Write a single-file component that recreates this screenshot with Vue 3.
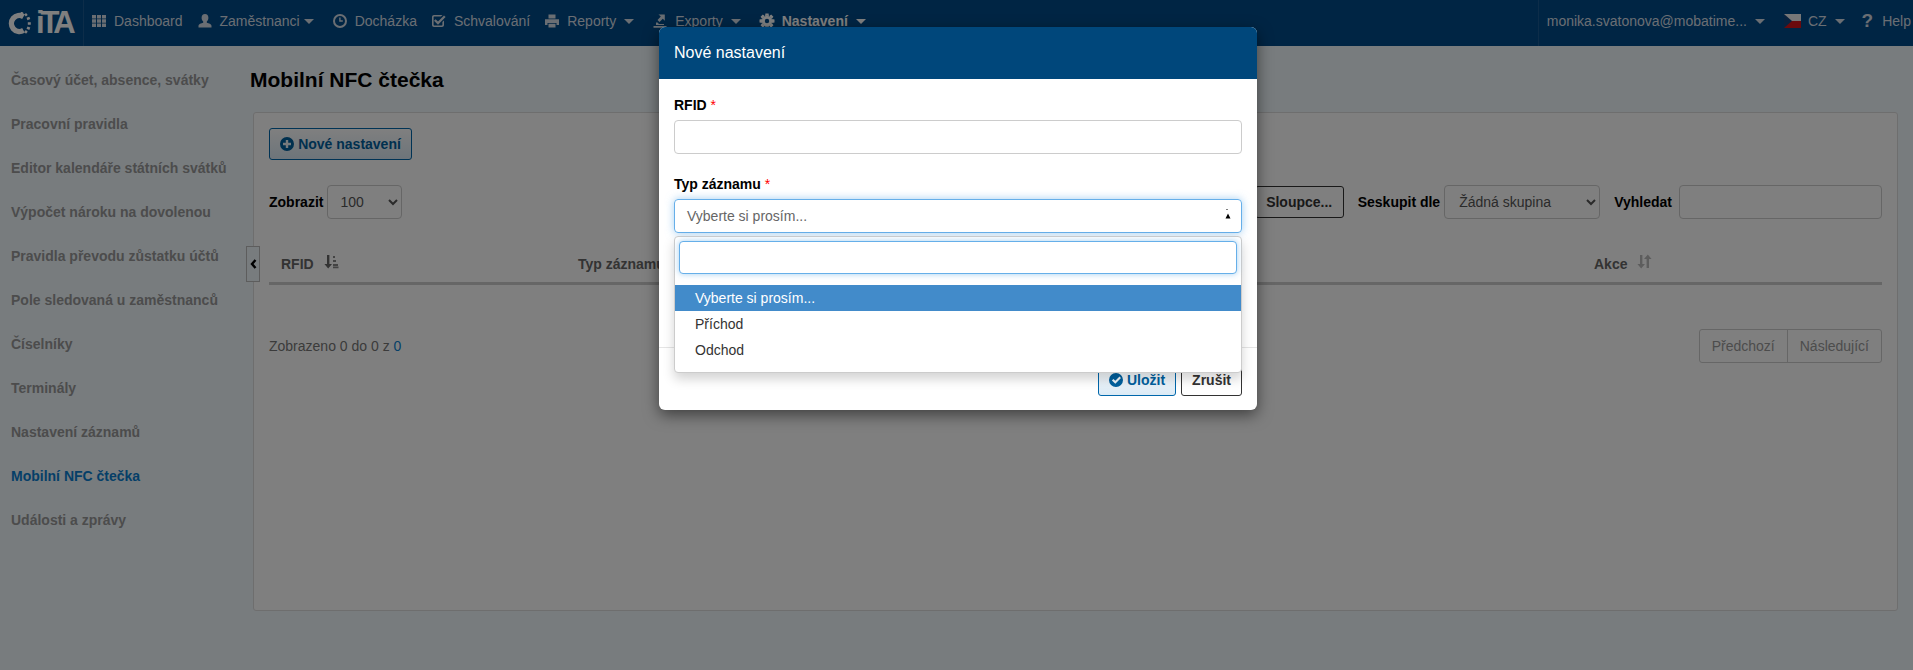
<script setup>
function gear() {
  let d = ''
  for (let i = 0; i < 8; i++) {
    const a = (i * Math.PI) / 4
    const pts = [[-1.6, -7.5], [1.6, -7.5], [1.9, -5.1], [-1.9, -5.1]].map(([x, y]) => {
      const px = 8 + x * Math.cos(a) - y * Math.sin(a)
      const py = 8 + x * Math.sin(a) + y * Math.cos(a)
      return `${px.toFixed(2)} ${py.toFixed(2)}`
    })
    d += `M${pts.join('L')}z`
  }
  return d + 'M8 2.8a5.2 5.2 0 1 0 0 10.4A5.2 5.2 0 0 0 8 2.8zm0 3a2.2 2.2 0 1 1 0 4.4a2.2 2.2 0 0 1 0-4.4z'
}

const icons = {
  grid: 'M1 2h4v3.4H1zM6 2h4v3.4H6zM11 2h4v3.4h-4zM1 6.3h4v3.4H1zM6 6.3h4v3.4H6zM11 6.3h4v3.4h-4zM1 10.6h4V14H1zM6 10.6h4V14H6zM11 10.6h4V14h-4z',
  user: 'M8 1C5.8 1 4.6 2.7 4.6 4.8c0 1.6.6 3 1.6 3.8v1.2c-2 .6-4.7 1.2-4.7 3.2v1.5h13v-1.5c0-2-2.7-2.6-4.7-3.2V8.6c1-.8 1.6-2.2 1.6-3.8C11.4 2.7 10.2 1 8 1z',
  clock: 'M8 1a7 7 0 1 0 0 14A7 7 0 0 0 8 1zm0 2a5 5 0 1 1 0 10A5 5 0 0 1 8 3zM7.2 4.5v4.2h3.6V7.3H8.6V4.5z',
  check: 'M3 2h8.5L9.9 3.6H3.2c-.4 0-.6.2-.6.6v7.6c0 .4.2.6.6.6h7.6c.4 0 .6-.2.6-.6V9L13 7.4V12c0 1.2-.9 2-2 2H3c-1.1 0-2-.8-2-2V4c0-1.1.9-2 2-2zM4.6 6.2L7 8.5l6-6 1.6 1.6L7 11.7 3 7.8z',
  print: 'M4.5 1.5h7v4h-7zM1 6.3h14v5.7h-2.5v-2h-9v2H1zM4.5 10.8h7v3.7h-7z',
  export: 'M6.5 1.5h6.3v6.3l-2-2-3.3 3.3-2-2 3.3-3.6zM4 9.5h1.5l1.5 1.5H12v1H4zM1.5 13h13v1.8h-13z',
  cog: gear()
}

const navItems = [
  { label: 'Dashboard', icon: 'grid' },
  { label: 'Zaměstnanci', icon: 'user', caret: 'tight' },
  { label: 'Docházka', icon: 'clock' },
  { label: 'Schvalování', icon: 'check' },
  { label: 'Reporty', icon: 'print', caret: 'wide' },
  { label: 'Exporty', icon: 'export', caret: 'wide' },
  { label: 'Nastavení', icon: 'cog', caret: 'wide', active: true }
]

const sideItems = [
  'Časový účet, absence, svátky',
  'Pracovní pravidla',
  'Editor kalendáře státních svátků',
  'Výpočet nároku na dovolenou',
  'Pravidla převodu zůstatku účtů',
  'Pole sledovaná u zaměstnanců',
  'Číselníky',
  'Terminály',
  'Nastavení záznamů',
  'Mobilní NFC čtečka',
  'Události a zprávy'
]

const options = ['Vyberte si prosím...', 'Příchod', 'Odchod']
</script>

<template>
  <div class="page">
    <header class="nav">
      <div class="logo">
        <svg class="logo__mark" width="23" height="23" viewBox="0 0 23 23">
          <path d="M15.5 4.6A8 8 0 1 0 15.5 18.400" fill="none" stroke="#fff" stroke-width="5.400" />
          <path d="M13.500 1.500l1-1.300M17 3.600l1.900-1.600M19 7l2.800-1.100M19.800 11.500h3M19 15.600l2.800 1.200M17 19l1.900 1.700" fill="none" stroke="#fff" stroke-width="2.600" />
        </svg>
        <span class="logo__text">iTA</span>
      </div>
      <nav class="nav__main">
        <a v-for="item in navItems" :key="item.label" class="nav__item" :class="{ 'is-active': item.active }">
          <svg class="nav__icon" viewBox="0 0 16 16"><path :d="icons[item.icon]" fill-rule="evenodd" /></svg>
          <span>{{ item.label }}</span>
          <i v-if="item.caret" class="caret" :class="`caret--${item.caret}`"></i>
        </a>
      </nav>
      <div class="nav__right">
        <a class="nav__item nav__user">monika.svatonova@mobatime...<i class="caret caret--wide"></i></a>
        <a class="nav__item nav__lang">
          <svg width="17" height="14" viewBox="0 0 17 14">
            <rect width="17" height="7" fill="#eee" />
            <rect y="7" width="17" height="7" fill="#d7141a" />
            <path d="M0 0l8 7-8 7z" fill="#11457e" />
          </svg>
          <span>CZ</span><i class="caret caret--wide"></i>
        </a>
        <a class="nav__item nav__help"><b>?</b><span>Help</span></a>
      </div>
    </header>

    <div class="body">
      <aside class="side">
        <a v-for="item in sideItems" :key="item" class="side__item" :class="{ 'is-active': item === 'Mobilní NFC čtečka' }">{{ item }}</a>
      </aside>

      <main class="main">
        <h1 class="main__title">Mobilní NFC čtečka</h1>
        <section class="card">
          <span class="card__toggle">
            <svg width="7" height="10" viewBox="0 0 7 10"><path d="M5.500 1L2 5l3.500 4" fill="none" stroke="#000" stroke-width="2.400" /></svg>
          </span>
          <button class="btn btn--primary btn--add">
            <svg width="14" height="14" viewBox="0 0 14 14"><path d="M7 0a7 7 0 1 0 0 14A7 7 0 0 0 7 0zM5.800 3h2.400v2.800H11v2.400H8.200V11H5.800V8.200H3V5.800h2.800z" fill="#00609e" fill-rule="evenodd" /></svg>
            Nové nastavení
          </button>

          <div class="filters">
            <label class="filters__label">Zobrazit</label>
            <select class="control control--size"><option>100</option></select>
            <button class="btn btn--plain filters__columns">Sloupce...</button>
            <label class="filters__label filters__label--group">Seskupit dle</label>
            <select class="control control--group"><option>Žádná skupina</option></select>
            <label class="filters__label filters__label--search">Vyhledat</label>
            <input class="control control--search" />
          </div>

          <div class="thead">
            <span class="thead__cell">
              RFID
              <svg class="sort" width="15" height="15" viewBox="0 0 15 15"><path d="M3 1h2.400v9H8l-3.800 4.500L.4 10H3z" fill="#666" /><path d="M9 2h2v2H9zM9 6h3v2H9zM9 10h5v2H9zM9 12.600h5.500v1.600H9z" fill="#888" /></svg>
            </span>
            <span class="thead__cell">Typ záznamu</span>
            <span class="thead__cell">
              Akce
              <svg class="sort" width="15" height="15" viewBox="0 0 15 15"><path d="M3 1h2.400v9H8l-3.800 4.500L.4 10H3zM9.600 14V5H7l3.800-4.500L14.600 5H12v9z" fill="#bbb" /></svg>
            </span>
          </div>

          <div class="foot">
            <span class="foot__info">Zobrazeno 0 do 0 z <a class="foot__link">0</a></span>
            <div class="pager">
              <a class="pager__btn">Předchozí</a>
              <a class="pager__btn">Následující</a>
            </div>
          </div>
        </section>
      </main>
    </div>

    <div class="backdrop"></div>

    <div class="modal">
      <div class="modal__head">Nové nastavení</div>
      <div class="modal__body">
        <label class="field-label">RFID <em>*</em></label>
        <input class="control control--wide" />
        <label class="field-label field-label--second">Typ záznamu <em>*</em></label>
        <div class="picker">
          <div class="picker__value">
            Vyberte si prosím...
            <svg class="picker__arrow" width="6" height="10" viewBox="0 0 6 10"><path d="M1.500 0h1v1h-1zM3 4.500L5.500 9.500H.5z" fill="#000" /></svg>
          </div>
          <div class="picker__menu">
            <div class="picker__search"><input class="picker__input" /></div>
            <ul class="picker__list">
              <li v-for="(opt, i) in options" :key="opt" class="picker__option" :class="{ 'is-selected': i === 0 }">{{ opt }}</li>
            </ul>
          </div>
        </div>
      </div>
      <div class="modal__foot">
        <button class="btn btn--primary">
          <svg width="14" height="14" viewBox="0 0 14 14"><path d="M7 0a7 7 0 1 0 0 14A7 7 0 0 0 7 0zm3.500 3.600L12 5.100l-5.700 5.700L2.900 7.400l1.500-1.500 1.900 1.900z" fill="#00609e" fill-rule="evenodd" /></svg>
          Uložit
        </button>
        <button class="btn btn--plain">Zrušit</button>
      </div>
    </div>
  </div>
</template>

<style>
html, body {
  margin: 0;
  overflow: hidden;
}
</style>

<style scoped>
* {
  box-sizing: border-box;
}

.page {
  position: relative;
  display: flex;
  flex-direction: column;
  height: 100vh;
  overflow: hidden;
  font-family: "Liberation Sans", Arial, sans-serif;
  font-size: 14px;
  color: #333;
  background-color: #f0f8fd;
}

.nav {
  display: flex;
  align-items: center;
  flex: none;
  height: 46px;
  background-color: #004a88;
  color: #d5dde6;
}

.logo {
  display: flex;
  align-items: center;
  flex: none;
  width: 84px;
  height: 46px;
  padding-left: 8px;
  border-right: 1px solid #1a5a92;
}

.logo__mark {
  flex: none;
}

.logo__text {
  margin-left: 5px;
  font-size: 31px;
  font-weight: 700;
  letter-spacing: -4px;
  color: #fff;
}

.nav__main {
  display: flex;
  align-items: center;
  gap: 14px;
  margin-left: 7px;
  padding-bottom: 4px;
}

.nav__item {
  display: flex;
  align-items: center;
  white-space: nowrap;
}

.nav__item.is-active {
  font-weight: 700;
  color: #fff;
}

.nav__icon {
  flex: none;
  width: 16px;
  height: 16px;
  margin-right: 7px;
  fill: currentColor;
}

.caret {
  flex: none;
  width: 0;
  height: 0;
  margin-right: 4px;
  border-top: 5px solid currentColor;
  border-left: 5px solid transparent;
  border-right: 5px solid transparent;
}

.caret--tight {
  margin-left: 4px;
}

.caret--wide {
  margin-left: 8px;
}

.nav__right {
  display: flex;
  align-items: center;
  height: 46px;
  margin-left: auto;
  padding: 0 2px 4px 8px;
  border-left: 1px solid #1a5a92;
}

.nav__lang {
  margin-left: 15px;
}

.nav__lang span {
  margin-left: 7px;
}

.nav__help {
  margin-left: 13px;
}

.nav__help b {
  margin-right: 9px;
  font-size: 19px;
}

.body {
  display: flex;
  flex: 1;
  min-height: 0;
}

.side {
  flex: none;
  width: 250px;
  padding: 12px 0 0 11px;
}

.side__item {
  display: block;
  height: 44px;
  line-height: 44px;
  font-size: 14px;
  font-weight: 700;
  color: #999;
  white-space: nowrap;
}

.side__item.is-active {
  color: #0b7fd0;
}

.main {
  flex: 1;
  min-width: 0;
  padding-right: 15px;
}

.main__title {
  margin: 0;
  padding-top: 22px;
  height: 66px;
  font-size: 21px;
  line-height: 24px;
  font-weight: 700;
  color: #000;
}

.card {
  position: relative;
  height: 499px;
  margin-left: 3px;
  padding: 15px;
  border: 1px solid #ddd;
  border-radius: 3px;
  background-color: #fff;
}

.card__toggle {
  position: absolute;
  left: -8px;
  top: 133px;
  display: flex;
  align-items: center;
  justify-content: center;
  width: 14px;
  height: 36px;
  border: 1px solid #bbb;
  background-color: #f0f8fd;
}

.btn {
  display: inline-flex;
  align-items: center;
  justify-content: center;
  gap: 4px;
  height: 32px;
  padding: 0 10px;
  border-radius: 3px;
  font-family: inherit;
  font-size: 14px;
  font-weight: 700;
  white-space: nowrap;
}

.btn--primary {
  border: 1px solid #0067ab;
  color: #00609e;
  background: linear-gradient(#fff, #dbeaf5);
}

.btn--plain {
  border: 1px solid #333;
  color: #333;
  background-color: #fff;
}

.btn--add {
  width: 143px;
}

.filters {
  display: flex;
  align-items: center;
  height: 34px;
  margin-top: 25px;
}

.filters__label {
  font-weight: 700;
  color: #000;
}

.filters__label--group {
  margin-left: 14px;
}

.filters__label--search {
  margin-left: 14px;
}

.filters__columns {
  width: 89px;
  margin-left: auto;
}

.control {
  height: 34px;
  border: 1px solid #ccc;
  border-radius: 4px;
  background-color: #fff;
  font-family: inherit;
  font-size: 14px;
  color: #555;
  padding: 0 6px;
  outline: none;
}

.control--size {
  width: 75px;
  margin-left: 4px;
  padding-left: 8px;
}

.control--group {
  width: 156px;
  margin-left: 4px;
  padding-left: 10px;
}

.control--search {
  width: 203px;
  margin-left: 7px;
}

.control--wide {
  display: block;
  width: 100%;
}

.thead {
  display: grid;
  grid-template-columns: 297px 1fr 300px;
  align-items: center;
  height: 40px;
  margin-top: 26px;
  border-bottom: 3px solid #ccc;
}

.thead__cell {
  display: flex;
  align-items: center;
  gap: 10px;
  padding-left: 12px;
  font-weight: 700;
  color: #666;
}

.sort {
  margin-top: -4px;
}

.foot {
  display: flex;
  align-items: center;
  justify-content: space-between;
  height: 34px;
  margin-top: 44px;
}

.foot__info {
  color: #777;
}

.foot__link {
  color: #0b7fd0;
}

.pager {
  display: flex;
  height: 34px;
  border: 1px solid #ccc;
  border-radius: 3px;
}

.pager__btn {
  display: flex;
  align-items: center;
  padding: 0 12px;
  color: #999;
}

.pager__btn + .pager__btn {
  border-left: 1px solid #ccc;
}

.backdrop {
  position: absolute;
  inset: 0;
  background-color: rgba(0, 0, 0, 0.5);
}

.modal {
  position: absolute;
  left: 659px;
  top: 27px;
  width: 598px;
  height: 383px;
  display: flex;
  flex-direction: column;
  border-radius: 6px;
  background-color: #fff;
  box-shadow: 0 5px 15px rgba(0, 0, 0, 0.5);
}

.modal__head {
  flex: none;
  height: 52px;
  padding: 0 15px;
  border-radius: 6px 6px 0 0;
  line-height: 52px;
  font-size: 16px;
  color: #fff;
  background-color: #00477b;
}

.modal__body {
  flex: none;
  height: 268px;
  padding: 18px 15px 0;
}

.field-label {
  display: block;
  height: 16px;
  margin-bottom: 7px;
  line-height: 16px;
  font-weight: 700;
  color: #000;
}

.field-label em {
  font-style: normal;
  font-weight: 400;
  color: #f00;
}

.field-label--second {
  margin-top: 22px;
}

.picker {
  position: relative;
}

.picker__value {
  position: relative;
  height: 34px;
  padding-left: 12px;
  border: 1px solid #66afe9;
  border-radius: 4px;
  line-height: 32px;
  color: #666;
  box-shadow: 0 0 8px rgba(102, 175, 233, 0.6);
}

.picker__arrow {
  position: absolute;
  right: 10px;
  top: 9px;
}

.picker__menu {
  position: absolute;
  left: 0;
  right: 0;
  top: 37px;
  z-index: 2;
  height: 137px;
  padding-top: 4px;
  border: 1px solid #ccc;
  border-radius: 4px;
  background-color: #fff;
  box-shadow: 0 6px 12px rgba(0, 0, 0, 0.175);
}

.picker__search {
  padding: 0 4px;
}

.picker__input {
  display: block;
  width: 100%;
  height: 33px;
  border: 1px solid #66afe9;
  border-radius: 4px;
  outline: none;
  box-shadow: 0 0 6px rgba(102, 175, 233, 0.6);
}

.picker__list {
  margin: 11px 0 0;
  padding: 0;
  list-style: none;
}

.picker__option {
  height: 26px;
  padding-left: 20px;
  line-height: 26px;
  color: #333;
}

.picker__option.is-selected {
  color: #fff;
  background-color: #428bca;
}

.modal__foot {
  display: flex;
  justify-content: flex-end;
  gap: 5px;
  flex: none;
  height: 63px;
  padding: 16px 15px 0;
  border-top: 1px solid #e5e5e5;
}
</style>
